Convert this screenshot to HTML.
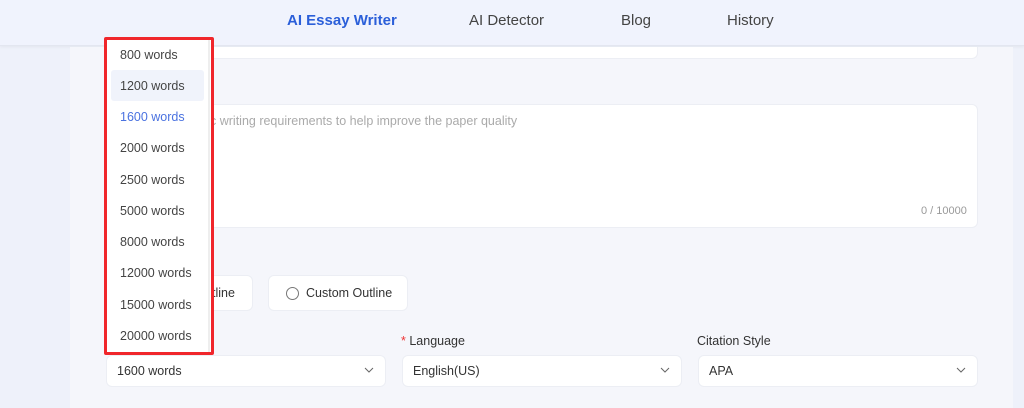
<!DOCTYPE html>
<html><head><style>
*{margin:0;padding:0;box-sizing:border-box}
body{width:1024px;height:408px;overflow:hidden;background:#eef1fa;font-family:"Liberation Sans",sans-serif;position:relative}
.hdr{position:absolute;left:0;top:0;width:1024px;height:46px;background:#f0f3fd;border-bottom:1px solid #e3e6f0;box-shadow:0 1px 3px rgba(0,0,0,.05)}
.nav{position:absolute;top:12px;font-size:15px;color:#444}
.panel{position:absolute;left:70px;top:47px;width:943px;height:361px;background:#f5f6fb}
.w{position:absolute;background:#fff;border-radius:6px;border:1px solid #eceef4}
.t{position:absolute;font-size:12.5px;color:#333}
.dd{position:absolute;left:104px;top:37px;width:110px;height:318px;border:3px solid #f0262b;background:#fff;border-radius:2px}
.it{position:absolute;left:13px;font-size:12.5px;color:#444}
</style></head><body>
<div class="hdr">
<div class="nav" style="left:287px;color:#2b5fd9;font-weight:bold">AI Essay Writer</div>
<div class="nav" style="left:469px">AI Detector</div>
<div class="nav" style="left:621px">Blog</div>
<div class="nav" style="left:727px">History</div>
</div>
<div class="panel"></div>
<div class="w" style="left:205px;top:47px;width:773px;height:12px;border-top:none;border-radius:0 0 6px 6px"></div>
<div class="w" style="left:105px;top:104px;width:873px;height:124px"></div>
<div class="t" style="left:210px;top:114px;color:#aaa">c writing requirements to help improve the paper quality</div>
<div class="t" style="left:921px;top:205px;color:#999;font-size:11px">0 / 10000</div>
<div class="w" style="left:106px;top:275px;width:147px;height:36px"></div>
<div class="t" style="left:212px;top:286px">tline</div>
<div class="w" style="left:268px;top:275px;width:140px;height:36px"></div>
<div style="position:absolute;left:286px;top:287px;width:13px;height:13px;border:1px solid #777;border-radius:50%"></div>
<div class="t" style="left:306px;top:286px">Custom Outline</div>
<div class="t" style="left:401px;top:334px"><span style="color:#e33">*</span> Language</div>
<div class="t" style="left:697px;top:334px">Citation Style</div>
<div class="w" style="left:106px;top:355px;width:280px;height:32px"></div>
<div class="w" style="left:402px;top:355px;width:280px;height:32px"></div>
<div class="w" style="left:698px;top:355px;width:280px;height:32px"></div>
<div class="t" style="left:117px;top:364px">1600 words</div>
<div class="t" style="left:413px;top:364px">English(US)</div>
<div class="t" style="left:709px;top:364px">APA</div>
<svg style="position:absolute;left:364px;top:367px" width="10" height="6"><path d="M1 1L5 5L9 1" stroke="#666" fill="none"/></svg>
<svg style="position:absolute;left:660px;top:367px" width="10" height="6"><path d="M1 1L5 5L9 1" stroke="#666" fill="none"/></svg>
<svg style="position:absolute;left:956px;top:367px" width="10" height="6"><path d="M1 1L5 5L9 1" stroke="#666" fill="none"/></svg>
<div class="dd">
<div style="position:absolute;left:101px;top:0;width:2px;height:312px;background:#eee"></div>
<div style="position:absolute;left:4px;top:30px;width:93px;height:31px;background:#f0f3fb;border-radius:3px"></div>
<div class="it" style="top:8px">800 words</div>
<div class="it" style="top:39px">1200 words</div>
<div class="it" style="top:70px;color:#4a72e0">1600 words</div>
<div class="it" style="top:101px">2000 words</div>
<div class="it" style="top:133px">2500 words</div>
<div class="it" style="top:164px">5000 words</div>
<div class="it" style="top:195px">8000 words</div>
<div class="it" style="top:226px">12000 words</div>
<div class="it" style="top:258px">15000 words</div>
<div class="it" style="top:289px">20000 words</div>
</div>
</body></html>
